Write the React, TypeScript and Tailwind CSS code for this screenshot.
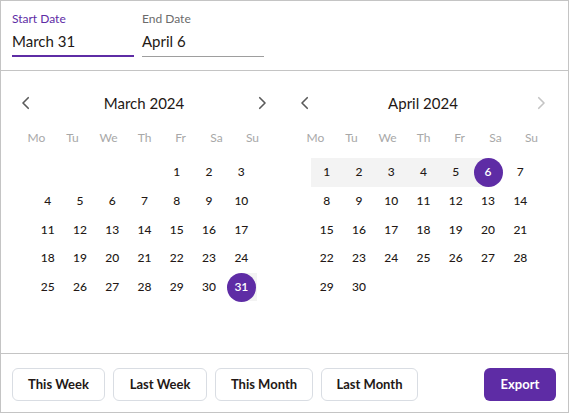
import React from 'react'

const PURPLE = 'bg-[#5e2ca5]'

type MonthProps = {
  title: string
  offset: number
  days: number
  selected: number
  range: [number, number]
  rangeSide: 'start' | 'end'
  nextDisabled?: boolean
}

const Chevron = ({ dir, disabled }: { dir: 'left' | 'right'; disabled?: boolean }) => (
  <svg viewBox="0 0 24 24" className={`h-[18px] w-[18px] ${disabled ? 'text-[#c4c4c4]' : 'text-[#5a5a5a]'}`} fill="none" stroke="currentColor" strokeWidth="2.2" strokeLinecap="round" strokeLinejoin="round">
    {dir === 'left' ? <path d="M15 5l-7 7 7 7" /> : <path d="M9 5l7 7-7 7" />}
  </svg>
)

const weekdays = ['Mo', 'Tu', 'We', 'Th', 'Fr', 'Sa', 'Su']

const Month = ({ title, offset, days, selected, range, rangeSide, nextDisabled }: MonthProps) => {
  const cells: (number | null)[] = []
  for (let i = 0; i < offset; i++) cells.push(null)
  for (let d = 1; d <= days; d++) cells.push(d)

  return (
    <div className="w-[279px]">
      <div className="mt-[17px] flex h-[30px] items-center justify-between pl-[7px] pr-[8px]">
        <button className="flex h-[28px] w-[28px] items-center justify-center">
          <Chevron dir="left" />
        </button>
        <span className="text-[15px] text-[#231815]">{title}</span>
        <button className="flex h-[28px] w-[28px] items-center justify-center">
          <Chevron dir="right" disabled={nextDisabled} />
        </button>
      </div>
      <div className="mx-auto grid h-[40px] w-[252px] grid-cols-7 items-center">
        {weekdays.map((w) => (
          <span key={w} className="text-center text-[12px] text-[#a8a8a8]">
            {w}
          </span>
        ))}
      </div>
      <div className="mx-auto grid w-[226px] grid-cols-7">
        {cells.map((d, i) => {
          const inRange = d !== null && d >= range[0] && d <= range[1]
          const isSel = d === selected
          let bg = ''
          if (inRange && !isSel) bg = 'bg-[#f3f3f3]'
          return (
            <div key={i} className={`relative flex h-[28.7px] items-center justify-center ${bg}`}>
              {isSel && (
                <div
                  className={`absolute top-0 h-full w-1/2 bg-[#f3f3f3] ${rangeSide === 'start' ? 'right-0' : 'left-0'}`}
                />
              )}
              {d !== null && (
                <span
                  className={`relative flex h-[29px] w-[29px] items-center justify-center rounded-full text-[12px] font-medium ${
                    isSel ? `${PURPLE} font-semibold text-white` : 'text-[#231815]'
                  }`}
                >
                  {d}
                </span>
              )}
            </div>
          )
        })}
      </div>
    </div>
  )
}

const QuickButton = ({ label, w }: { label: string; w: string }) => (
  <button className={`h-[33px] ${w} rounded-md border border-[#d9dde3] bg-white text-[13px] font-bold text-[#231815]`}>
    {label}
  </button>
)

export default function App() {
  return (
    <div className="flex h-[413px] w-[569px] flex-col border border-[#c4c4c4] bg-white font-['Lato',sans-serif]">
      <div className="flex h-[70px] shrink-0 gap-2 border-b border-[#c4c4c4] px-[11px] pt-[11px]">
        <div className="w-[122px]">
          <div className="text-[12px] leading-[14px] text-[#5e2ca5]">Start Date</div>
          <div className="mt-[5px] flex h-[26px] items-center border-b-2 border-[#5e2ca5] pb-[3px] text-[15px] text-[#231815]">
            March 31
          </div>
        </div>
        <div className="w-[122px]">
          <div className="text-[12px] leading-[14px] text-[#6b6b6b]">End Date</div>
          <div className="mt-[5px] flex h-[26px] items-center border-b border-[#9e9e9e] pb-[4px] text-[15px] text-[#231815]">
            April 6
          </div>
        </div>
      </div>
      <div className="flex flex-1 px-[4px]">
        <Month title="March 2024" offset={4} days={31} selected={31} range={[31, 31]} rangeSide="start" />
        <Month title="April 2024" offset={0} days={30} selected={6} range={[1, 6]} rangeSide="end" nextDisabled />
      </div>
      <div className="flex h-[59px] shrink-0 items-center border-t border-[#c4c4c4] px-[11px] pt-[3px]">
        <div className="flex gap-2">
          <QuickButton label="This Week" w="w-[93px]" />
          <QuickButton label="Last Week" w="w-[94px]" />
          <QuickButton label="This Month" w="w-[98px]" />
          <QuickButton label="Last Month" w="w-[97px]" />
        </div>
        <button className={`ml-auto mr-[1px] h-[33px] w-[72px] rounded-md ${PURPLE} text-[13px] font-bold text-white`}>
          Export
        </button>
      </div>
    </div>
  )
}
